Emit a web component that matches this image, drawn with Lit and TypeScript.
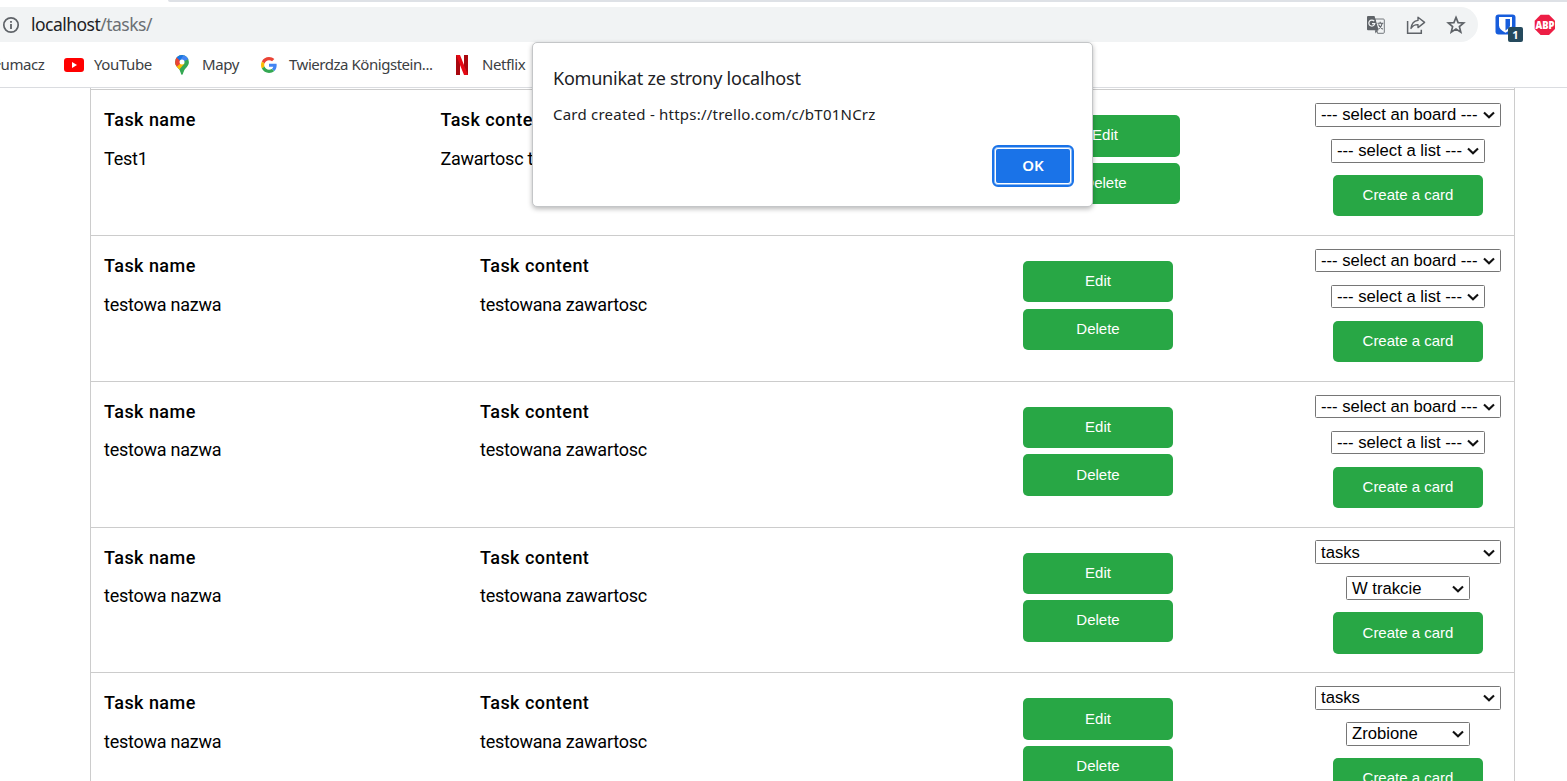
import { LitElement, html, css, svg } from "lit";
import { customElement, property } from "lit/decorators.js";
import { classMap } from "lit/directives/class-map.js";

interface Task {
  name: string;
  content: string;
  board: string;
  list: string;
  wide?: boolean;
}

const BOARD = "--- select an board ---";
const LIST = "--- select a list ---";

const TASKS: Task[] = [
  { name: "Test1", content: "Zawartosc testowa", board: BOARD, list: LIST, wide: true },
  { name: "testowa nazwa", content: "testowana zawartosc", board: BOARD, list: LIST },
  { name: "testowa nazwa", content: "testowana zawartosc", board: BOARD, list: LIST },
  { name: "testowa nazwa", content: "testowana zawartosc", board: "tasks", list: "W trakcie" },
  { name: "testowa nazwa", content: "testowana zawartosc", board: "tasks", list: "Zrobione" },
];

@customElement("pick-box")
class PickBox extends LitElement {
  @property() label = "";
  static styles = css`
    :host {
      display: flex;
      align-items: center;
      justify-content: space-between;
      box-sizing: border-box;
      height: 23.8px;
      padding: 0.7px 5px 0 5px;
      border: 1px solid #767676;
      border-radius: 1.5px;
      background: #fff;
      color: #000;
      font: 16.67px/20px "Liberation Sans", Arial, sans-serif;
      white-space: nowrap;
    }
    svg { flex: none; display: block; }
  `;
  render() {
    return html`<span>${this.label}</span>
      <svg width="12" height="8" viewBox="0 0 12 8"><path d="M1 1.4 6 6.2 11 1.4" fill="none" stroke="#111" stroke-width="2.1"/></svg>`;
  }
}

@customElement("task-row")
class TaskRow extends LitElement {
  @property({ attribute: false }) task!: Task;
  static styles = css`
    :host { display: block; }
    .row {
      display: flex;
      box-sizing: border-box;
      height: 145.85px;
      border-top: 1px solid #ccc;
      padding: 0 13px;
      align-items: flex-start;
    }
    .name { width: 376px; }
    .content { width: 543px; }
    .wide .name { width: 336.4px; }
    .wide .content { width: 589.6px; }
    .text { padding-top: 18px; flex: none; }
    h3, p { margin: 0; font: 18px/24px Roboto, sans-serif; color: #000; white-space: nowrap; }
    h3 { font-weight: 500; letter-spacing: 0.45px; }
    p { margin-top: 14.8px; letter-spacing: -0.24px; }
    button {
      display: block;
      width: 150px;
      height: 41.5px;
      padding: 0 0 1px;
      border: 0;
      border-radius: 5px;
      background: #28a745;
      color: #fff;
      font: 15px/20px "Liberation Sans", Arial, sans-serif;
    }
    .actions { flex: none; display: grid; gap: 6.2px; padding-top: 25px; }
    .trello {
      margin-left: auto;
      width: 186px;
      display: flex;
      flex-direction: column;
      align-items: center;
      gap: 12.2px;
      padding-top: 12.85px;
    }
    .board { width: 186px; }
    .list { width: 154px; }
    .list.short { width: 124px; }
  `;
  render() {
    const t = this.task;
    return html`<div class=${classMap({ row: true, wide: !!t.wide })}>
      <div class="text name"><h3>Task name</h3><p>${t.name}</p></div>
      <div class="text content"><h3>Task content</h3><p>${t.content}</p></div>
      <div class="actions"><button>Edit</button><button>Delete</button></div>
      <div class="trello">
        <pick-box class="board" .label=${t.board}></pick-box>
        <pick-box class=${classMap({ list: true, short: t.list !== LIST })} .label=${t.list}></pick-box>
        <button>Create a card</button>
      </div>
    </div>`;
  }
}

const infoIcon = svg`<svg class="info" width="18" height="18" viewBox="0 0 18 18"><circle cx="9" cy="9" r="7.2" fill="none" stroke="#5f6368" stroke-width="1.7"/><path d="M9 8v5M9 5v1.8" stroke="#5f6368" stroke-width="1.8"/></svg>`;

const translateIcon = svg`<svg width="20" height="20" viewBox="0 0 20 20"><path d="M9 4h8.3q1 0 1 1v12.3q0 1-1 1H11.5z" fill="#f1f3f4" stroke="#75797d" stroke-width="1"/><path d="M2 1h6.5l4.2 14.2H2q-1 0-1-1V2q0-1 1-1z" fill="#5f6368"/><path d="M11.7 15.3 9.6 18.4 8.8 15.3z" fill="#5f6368"/><path d="M8.2 6.2A3 3 0 1 0 8.8 8.7H6" fill="none" stroke="#f1f3f4" stroke-width="1.2"/><path d="M11.5 8.2h5.8M14.2 6.7v1.5M16.2 8.3q-.8 3.6-3.5 5.6M12.5 9.6q1.2 2.6 4.2 4.6" fill="none" stroke="#5f6368" stroke-width="1.1"/></svg>`;

const shareIcon = svg`<svg width="20" height="20" viewBox="0 0 20 20"><path d="M1.6 6v12.2h13.7v-3.5" fill="none" stroke="#5f6368" stroke-width="1.5"/><path d="M12 2.2 18.6 7.4 12 12.6V9.6Q7.6 9.4 5 13.4 5.8 6.2 12 5.4z" fill="none" stroke="#5f6368" stroke-width="1.4" stroke-linejoin="round"/></svg>`;

const starIcon = svg`<svg width="20" height="20" viewBox="0 0 20 20"><path d="m10 2.4 2.1 5.2 5.6.4-4.3 3.6 1.4 5.5-4.8-3-4.8 3 1.4-5.5L2.3 8l5.6-.4z" fill="none" stroke="#5f6368" stroke-width="1.7"/></svg>`;

const shieldIcon = svg`<svg width="21" height="21" viewBox="0 0 21 21"><rect x=".5" y=".5" width="20" height="20" rx="3" fill="#175ddc"/><path d="M4 3h13v8.5q0 4-6.5 7.3Q4 15.500 4 11.500z" fill="#fff"/><path d="M10.500 5H15v6.500q0 2.200-4.500 4.900z" fill="#175ddc"/></svg>`;

const abpIcon = svg`<svg class="abp" width="22" height="22" viewBox="0 0 22 22"><path d="M6.600.700h8.400l6 6v8.400l-6 6H6.600L.700 15.100V6.700z" fill="#ed1e45"/><text x="11" y="14.600" text-anchor="middle" textLength="19" lengthAdjust="spacingAndGlyphs" fill="#fff" font-family="Open Sans, sans-serif" font-weight="800" font-size="10">ABP</text></svg>`;

const youtubeIcon = svg`<svg width="20" height="14" viewBox="0 0 20 14"><rect width="20" height="14" rx="3" fill="#f00"/><path d="M8 4v6l5-3z" fill="#fff"/></svg>`;

const mapsIcon = svg`<svg width="14" height="20" viewBox="0 0 14 20"><defs><clipPath id="pin"><path d="M7 0a6.900 6.900 0 0 1 6.900 7c0 3.500-2.300 5-4 7.300C8.500 16.300 8 20 7 20s-1.500-3.700-2.900-5.700C2.400 12 .1 10.500.1 7A6.900 6.900 0 0 1 7 0z"/></clipPath></defs><g clip-path="url(#pin)"><path d="M0 0h14v20H0z" fill="#34a853"/><path d="M-1 9 7 7 9.500 8.500 2.600 16.500-1 13z" fill="#fbbc04"/><path d="M-1 2H2L7 7 1.200 12.200-1 10z" fill="#ea4335"/><path d="M1.500 2.500 5 5.700 9.500-1H1z" fill="#1a73e8"/><path d="M9.200-1 14 4 7 7 5 5.600z" fill="#4285f4"/></g><circle cx="7" cy="7" r="2.500" fill="#fff"/></svg>`;

const googleIcon = svg`<svg width="16" height="16" viewBox="0 0 48 48"><path fill="#ea4335" d="M24 9.500c3.540 0 6.710 1.220 9.210 3.600l6.850-6.850C35.900 2.380 30.470 0 24 0 14.620 0 6.510 5.380 2.560 13.220l7.980 6.190C12.430 13.720 17.740 9.500 24 9.500z"/><path fill="#4285f4" d="M46.980 24.550c0-1.570-.15-3.090-.38-4.550H24v9.020h12.940c-.58 2.960-2.260 5.480-4.780 7.180l7.730 6c4.510-4.180 7.090-10.360 7.090-17.650z"/><path fill="#fbbc05" d="M10.530 28.590c-.48-1.450-.76-2.990-.76-4.590s.27-3.140.76-4.590l-7.980-6.190C.92 16.460 0 20.120 0 24c0 3.880.92 7.540 2.560 10.780z"/><path fill="#34a853" d="M24 48c6.480 0 11.930-2.130 15.890-5.810l-7.730-6c-2.150 1.450-4.920 2.300-8.160 2.300-6.260 0-11.570-4.220-13.470-9.910l-7.980 6.190C6.510 42.620 14.620 48 24 48z"/></svg>`;

const netflixIcon = svg`<svg width="12" height="20" viewBox="0 0 12 20"><path d="M0 0h4v20H0zM8 0h4v20H8z" fill="#a9080f"/><path d="M0 0h4l8 20H8z" fill="#e50914"/></svg>`;

@customElement("app-root")
class AppRoot extends LitElement {
  static styles = css`
    :host {
      display: block;
      position: relative;
      width: 1567px;
      height: 781px;
      overflow: hidden;
      background: #fff;
      font-family: "Open Sans", sans-serif;
    }
    .strip { height: 2px; margin-left: 168px; background: #dee1e6; border-bottom-left-radius: 4px; }
    .bar { display: flex; align-items: center; height: 35px; margin-top: 5px; }
    .omnibox {
      display: flex;
      align-items: center;
      box-sizing: border-box;
      width: 1496px;
      height: 35px;
      margin-left: -18px;
      padding: 0 12px 0 19.5px;
      border-radius: 17.5px;
      background: #f1f3f4;
    }
    .url { margin-left: 11.5px; padding-bottom: 2px; font: 17.5px/24px "Noto Sans", sans-serif; letter-spacing: -0.52px; color: #202124; }
    .url span { color: #6b6f73; }
    .tools { display: flex; gap: 20px; margin-left: auto; }
    .tools svg, .ext svg { display: block; }
    .ext { position: relative; margin-left: 17px; }
    .badge {
      position: absolute;
      left: 13px;
      top: 13px;
      width: 15px;
      height: 15px;
      border-radius: 2px;
      background: #254a5d;
      color: #fff;
      font: 700 11px/15px "Open Sans", sans-serif;
      text-align: center;
    }
    .abpwrap { margin-left: 18px; }
    .abp { display: block; }
    .marks { display: flex; align-items: center; height: 45px; border-bottom: 1px solid #dadce0; color: #3c4043; }
    .mark { display: flex; align-items: center; font: 15px/20px "Noto Sans", sans-serif; letter-spacing: -0.4px; white-space: nowrap; }
    .mark span { padding-bottom: 2px; }
    .mark svg { display: block; flex: none; }
    .m0 { width: 44.500px; margin-right: 19.500px; justify-content: flex-end; }
    .m1 { width: 111px; gap: 10px; }
    .m2 { width: 86px; gap: 13px; }
    .m3 { width: 195px; gap: 12px; letter-spacing: -0.460px; }
    .m4 { gap: 14px; }
    .table {
      width: 1423px;
      height: 693px;
      margin-left: 90px;
      padding-top: 1px;
      box-sizing: content-box;
      border: solid #ccc;
      border-width: 0 1px;
    }
    .dialog {
      position: absolute;
      left: 532px;
      top: 42px;
      width: 561px;
      height: 165px;
      box-sizing: border-box;
      display: flex;
      flex-direction: column;
      padding: 23px 18px 19px 20px;
      border: 1px solid #c4c6c8;
      border-radius: 5px;
      background: #fff;
      box-shadow: 0 2px 5px rgba(0, 0, 0, 0.28);
      color: #202124;
    }
    .title { font: 18px/24px "Noto Sans", sans-serif; letter-spacing: -0.22px; white-space: nowrap; }
    .msg { margin-top: 14px; font: 15px/20px "Noto Sans", sans-serif; letter-spacing: 0.23px; white-space: nowrap; }
    .ok {
      align-self: flex-end;
      margin-top: auto;
      box-sizing: border-box;
      width: 82px;
      height: 42px;
      padding: 0 0 2px;
      border: 2px solid #1a73e8;
      border-radius: 6px;
      background: #1a73e8;
      box-shadow: inset 0 0 0 1px #8ab8f3, inset 0 0 0 2px #fff;
      color: #fff;
      font: 600 15px/20px "Noto Sans", sans-serif;
    }
  `;
  render() {
    return html`
      <div class="strip"></div>
      <div class="bar">
        <div class="omnibox">
          ${infoIcon}
          <div class="url">localhost<span>/tasks/</span></div>
          <div class="tools">${translateIcon}${shareIcon}${starIcon}</div>
        </div>
        <div class="ext">${shieldIcon}<div class="badge">1</div></div>
        <div class="abpwrap">${abpIcon}</div>
      </div>
      <div class="marks">
        <div class="mark m0"><span>łumacz</span></div>
        <div class="mark m1">${youtubeIcon}<span>YouTube</span></div>
        <div class="mark m2">${mapsIcon}<span>Mapy</span></div>
        <div class="mark m3">${googleIcon}<span>Twierdza Königstein...</span></div>
        <div class="mark m4">${netflixIcon}<span>Netflix</span></div>
      </div>
      <div class="table">${TASKS.map((t) => html`<task-row .task=${t}></task-row>`)}</div>
      <div class="dialog">
        <div class="title">Komunikat ze strony localhost</div>
        <div class="msg">Card created - https://trello.com/c/bT01NCrz</div>
        <button class="ok">OK</button>
      </div>
    `;
  }
}
